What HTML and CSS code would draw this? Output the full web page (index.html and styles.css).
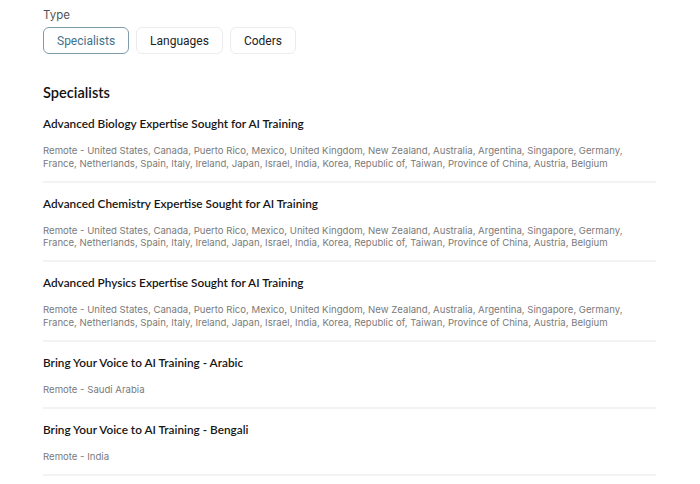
FILE: index.html
```html
<!DOCTYPE html>
<html>
<head>
<meta charset="utf-8">
<link rel="stylesheet" href="styles.css">
</head>
<body>
<div class="page">
  <div class="type-label">Type</div>
  <div class="tabs">
    <button class="tab active">Specialists</button>
    <button class="tab">Languages</button>
    <button class="tab">Coders</button>
  </div>
  <h2 class="section-title">Specialists</h2>
  <ul class="jobs">
    <li class="job">
      <div class="job-title">Advanced Biology Expertise Sought for AI Training</div>
      <div class="job-loc">Remote - United States, Canada, Puerto Rico, Mexico, United Kingdom, New Zealand, Australia, Argentina, Singapore, Germany, France, Netherlands, Spain, Italy, Ireland, Japan, Israel, India, Korea, Republic of, Taiwan, Province of China, Austria, Belgium</div>
    </li>
    <li class="job">
      <div class="job-title">Advanced Chemistry Expertise Sought for AI Training</div>
      <div class="job-loc">Remote - United States, Canada, Puerto Rico, Mexico, United Kingdom, New Zealand, Australia, Argentina, Singapore, Germany, France, Netherlands, Spain, Italy, Ireland, Japan, Israel, India, Korea, Republic of, Taiwan, Province of China, Austria, Belgium</div>
    </li>
    <li class="job">
      <div class="job-title">Advanced Physics Expertise Sought for AI Training</div>
      <div class="job-loc">Remote - United States, Canada, Puerto Rico, Mexico, United Kingdom, New Zealand, Australia, Argentina, Singapore, Germany, France, Netherlands, Spain, Italy, Ireland, Japan, Israel, India, Korea, Republic of, Taiwan, Province of China, Austria, Belgium</div>
    </li>
    <li class="job">
      <div class="job-title">Bring Your Voice to AI Training - Arabic</div>
      <div class="job-loc">Remote - Saudi Arabia</div>
    </li>
    <li class="job">
      <div class="job-title">Bring Your Voice to AI Training - Bengali</div>
      <div class="job-loc">Remote - India</div>
    </li>
  </ul>
</div>
</body>
</html>
```

FILE: styles.css
```css
* { box-sizing: border-box; }
html, body { margin: 0; padding: 0; background: #fff; }
body { font-family: Lato, "Open Sans", sans-serif; color: #1a1a1a; }
.page { padding: 7px 44px 0 43px; }
.type-label { font-family: Inter, sans-serif; font-size: 11.5px; line-height: 16px; color: #555; }
.tabs { display: flex; gap: 7px; margin-top: 4px; }
.tab {
  font-family: Roboto, sans-serif;
  font-size: 12px;
  height: 27px;
  padding: 0 13px;
  border: 1px solid #ececec;
  border-radius: 6px;
  background: #fff;
  color: #222;
}
.tab.active { border-color: #7f9cab; color: #3f7089; }
.section-title { font-size: 14.6px; font-weight: 600; margin: 29px 0 0; line-height: 20px; color: #111; }
.jobs { list-style: none; margin: 0; padding: 0; }
.job { border-bottom: 2px solid #f3f3f3; padding: 13px 0 10.5px; }
.job-title { font-size: 11.8px; font-weight: 600; line-height: 16px; color: #161616; }
.job-loc { font-family: Inter, sans-serif; font-size: 9.6px; line-height: 12.5px; color: #7a7a7a; margin-top: 13px; }
```
